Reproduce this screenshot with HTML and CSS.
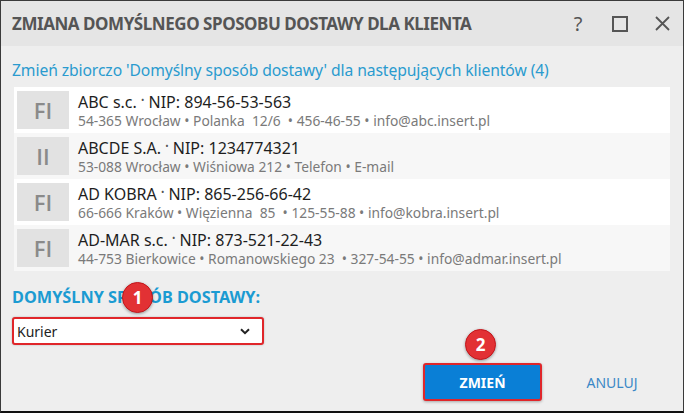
FILE: index.html
```html
<!DOCTYPE html>
<html lang="pl">
<head>
<meta charset="utf-8">
<link rel="stylesheet" href="styles.css">
</head>
<body>
<div class="window">
  <div class="titlebar">
    <div class="title">ZMIANA DOMYŚLNEGO SPOSOBU DOSTAWY DLA KLIENTA</div>
    <div class="controls">
      <span class="ctl help">?</span>
      <span class="ctl"><svg width="16" height="16" viewBox="0 0 16 16"><rect x="1" y="1" width="14" height="14" fill="none" stroke="#555" stroke-width="2"/></svg></span>
      <span class="ctl"><svg width="15" height="15" viewBox="0 0 15 15"><path d="M1 1L14 14M14 1L1 14" stroke="#555" stroke-width="1.8" fill="none"/></svg></span>
    </div>
  </div>
  <div class="content">
    <div class="subtitle">Zmień zbiorczo 'Domyślny sposób dostawy' dla następujących klientów (4)</div>
    <div class="list">
      <div class="row">
        <div class="avatar">FI</div>
        <div class="info">
          <div class="name">ABC s.c. <span class="dot">•</span> NIP: 894-56-53-563</div>
          <div class="details">54-365 Wrocław • Polanka&nbsp; 12/6&nbsp; • 456-46-55 • info@abc.insert.pl</div>
        </div>
      </div>
      <div class="row alt">
        <div class="avatar">II</div>
        <div class="info">
          <div class="name">ABCDE S.A. <span class="dot">•</span> NIP: 1234774321</div>
          <div class="details">53-088 Wrocław • Wiśniowa 212 • Telefon • E-mail</div>
        </div>
      </div>
      <div class="row">
        <div class="avatar">FI</div>
        <div class="info">
          <div class="name">AD KOBRA <span class="dot">•</span> NIP: 865-256-66-42</div>
          <div class="details">66-666 Kraków • Więzienna&nbsp; 85&nbsp; • 125-55-88 • info@kobra.insert.pl</div>
        </div>
      </div>
      <div class="row alt">
        <div class="avatar">FI</div>
        <div class="info">
          <div class="name">AD-MAR s.c. <span class="dot">•</span> NIP: 873-521-22-43</div>
          <div class="details">44-753 Bierkowice • Romanowskiego 23&nbsp; • 327-54-55 • info@admar.insert.pl</div>
        </div>
      </div>
    </div>
    <div class="field">
      <div class="label">DOMYŚLNY SPOSÓB DOSTAWY:</div>
      <span class="badge badge-1">1</span>
      <div class="select">
        <span>Kurier</span>
        <svg width="10" height="7" viewBox="0 0 10 7"><path d="M1 1.2L5 5.2L9 1.2" stroke="#222" stroke-width="2" fill="none"/></svg>
      </div>
    </div>
  </div>
  <div class="footer">
    <div class="primary-wrap">
      <span class="badge badge-2">2</span>
      <button class="btn-primary">ZMIEŃ</button>
    </div>
    <button class="btn-link">ANULUJ</button>
  </div>
</div>
</body>
</html>
```
FILE: styles.css
```css
* { box-sizing: border-box; }
html, body { margin: 0; padding: 0; }
body { font-family: "Noto Sans", "Open Sans", sans-serif; }
.window {
  width: 684px; height: 413px;
  border: 1px solid #3a3a3a; border-bottom: 2px solid #111;
  background: #eeeeee;
  display: flex; flex-direction: column;
}
.titlebar {
  height: 45px; flex: none;
  background: #e5e5e5;
  display: flex; align-items: center; justify-content: space-between;
  padding: 0 0 0 11px;
}
.title {
  font-size: 17px; font-weight: 700; color: #555;
  letter-spacing: -0.45px;
}
.controls { display: flex; align-items: center; height: 100%; }
.ctl {
  width: 42px; height: 100%;
  display: flex; align-items: center; justify-content: center;
  color: #555;
}
.help { font-size: 20px; font-weight: 400; }
.content { padding: 14px 12px 0 11px; flex: none; }
.subtitle {
  font-size: 15.7px; line-height: 20px; color: #2a9bcf; letter-spacing: -0.1px;
}
.list {
  margin: 7px 0 0 2px; width: 656px;
  background: #fff;
}
.row {
  height: 46px; display: flex; align-items: center;
  background: #fff; padding-left: 3px;
}
.row.alt { background: #f7f7f7; }
.avatar {
  width: 52px; height: 38px; flex: none;
  background: #e2e2e2; color: #8a8a8a;
  font-family: "Open Sans", "Liberation Sans", sans-serif;
  font-size: 22px; font-weight: 600;
  display: flex; align-items: center; justify-content: center;
}
.info { margin-left: 9px; }
.name { font-size: 16px; line-height: 20px; color: #1e1e1e; }
.dot { font-size: 9px; vertical-align: 5px; color: #555; }
.details { font-size: 13.8px; line-height: 18px; color: #7a7a7a; }
.field { position: relative; margin-top: 16px; }
.label {
  font-size: 16.3px; font-weight: 700; line-height: 20px; color: #1b9bd2;
}
.select {
  margin-top: 10px; width: 252px; height: 28px;
  background: #fff; border: 2px solid #e0262a; border-radius: 3px;
  display: flex; align-items: center; justify-content: space-between;
  padding: 0 12px 0 3px;
  font-size: 14px; color: #222;
  box-shadow: 0 0 2px rgba(0,0,0,0.25);
}
.badge {
  position: absolute;
  width: 31px; height: 31px; border-radius: 50%;
  background: #e23134; border: 1px solid #c4161c;
  color: #fff; font-size: 17px; font-weight: 700;
  display: flex; align-items: center; justify-content: center;
  box-shadow: 0 1px 3px rgba(0,0,0,0.35);
  z-index: 2;
}
.badge-1 { left: 110px; top: -5px; }
.footer {
  flex: 1; display: flex; justify-content: flex-end; align-items: flex-end;
  padding: 0 21px 10px 0; gap: 20px;
}
.primary-wrap { position: relative; }
.badge-2 { left: 42px; top: -34px; }
.btn-primary {
  width: 119px; height: 38px;
  background: #0a7fd6; color: #fff;
  border: 2px solid #e0262a; border-radius: 3px;
  font-family: inherit; font-size: 14px; font-weight: 700;
  box-shadow: 0 1px 3px rgba(0,0,0,0.3);
}
.btn-link {
  width: 100px; height: 38px;
  background: transparent; border: none;
  color: #3a88c6; font-family: inherit; font-size: 14px;
}
```
